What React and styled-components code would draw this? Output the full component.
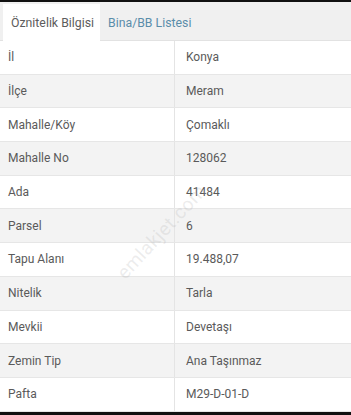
import React from 'react';
import styled, { createGlobalStyle } from 'styled-components';

const GlobalStyle = createGlobalStyle`
  html, body {
    margin: 0;
    padding: 0;
    background: #ffffff;
  }
  body {
    font-family: Roboto, "Liberation Sans", Arial, sans-serif;
  }
`;

const Screen = styled.div`
  position: relative;
  width: 351px;
  height: 415px;
  box-sizing: border-box;
  border-top: 2px solid #111;
  border-bottom: 3px solid #111;
  display: flex;
  flex-direction: column;
  overflow: hidden;
  background: #fff;
`;

const TabBar = styled.div`
  display: flex;
  align-items: stretch;
  height: 39px;
  box-sizing: border-box;
  padding: 2px 0 0 3px;
  background: #f0f0f0;
  border-bottom: 1px solid #e2e2e2;
  flex-shrink: 0;
`;

const Tab = styled.div`
  display: flex;
  align-items: center;
  padding: 0 ${({ active }) => (active ? '9px' : '11px')} 0 8px;
  width: ${({ active }) => (active ? '97px' : 'auto')};
  box-sizing: border-box;
  background: ${({ active }) => (active ? '#ffffff' : 'transparent')};
  color: ${({ active }) => (active ? '#5c5c5c' : '#5a8daa')};
  font-size: 12.3px;
  white-space: nowrap;
  margin-bottom: -1px;
`;

const Table = styled.div`
  display: flex;
  flex-direction: column;
`;

const Row = styled.div`
  display: grid;
  grid-template-columns: 174px 1fr;
  height: 33.7px;
  box-sizing: border-box;
  background: ${({ striped }) => (striped ? '#f3f3f3' : '#ffffff')};
  border-bottom: 1px solid #e6e6e6;
`;

const Cell = styled.div`
  display: flex;
  align-items: center;
  padding-left: ${({ value }) => (value ? '11px' : '8px')};
  border-left: ${({ value }) => (value ? '1px solid #e4e4e4' : 'none')};
  font-size: 12px;
  color: #5a5a5a;
  white-space: nowrap;
`;

const Watermark = styled.div`
  position: absolute;
  left: 112px;
  top: 266px;
  transform: rotate(-47deg);
  transform-origin: left top;
  font-size: 19px;
  letter-spacing: 0.5px;
  color: rgba(170, 170, 170, 0.22);
  pointer-events: none;
  white-space: nowrap;
`;

const rows = [
  ['İl', 'Konya'],
  ['İlçe', 'Meram'],
  ['Mahalle/Köy', 'Çomaklı'],
  ['Mahalle No', '128062'],
  ['Ada', '41484'],
  ['Parsel', '6'],
  ['Tapu Alanı', '19.488,07'],
  ['Nitelik', 'Tarla'],
  ['Mevkii', 'Devetaşı'],
  ['Zemin Tip', 'Ana Taşınmaz'],
  ['Pafta', 'M29-D-01-D'],
];

const App = () => (
  <>
    <GlobalStyle />
    <Screen>
      <TabBar>
        <Tab active>Öznitelik Bilgisi</Tab>
        <Tab>Bina/BB Listesi</Tab>
      </TabBar>
      <Table>
        {rows.map(([label, value], i) => (
          <Row key={label} striped={i % 2 === 1}>
            <Cell>{label}</Cell>
            <Cell value>{value}</Cell>
          </Row>
        ))}
      </Table>
      <Watermark>emlakjet.com</Watermark>
    </Screen>
  </>
);

export default App;
